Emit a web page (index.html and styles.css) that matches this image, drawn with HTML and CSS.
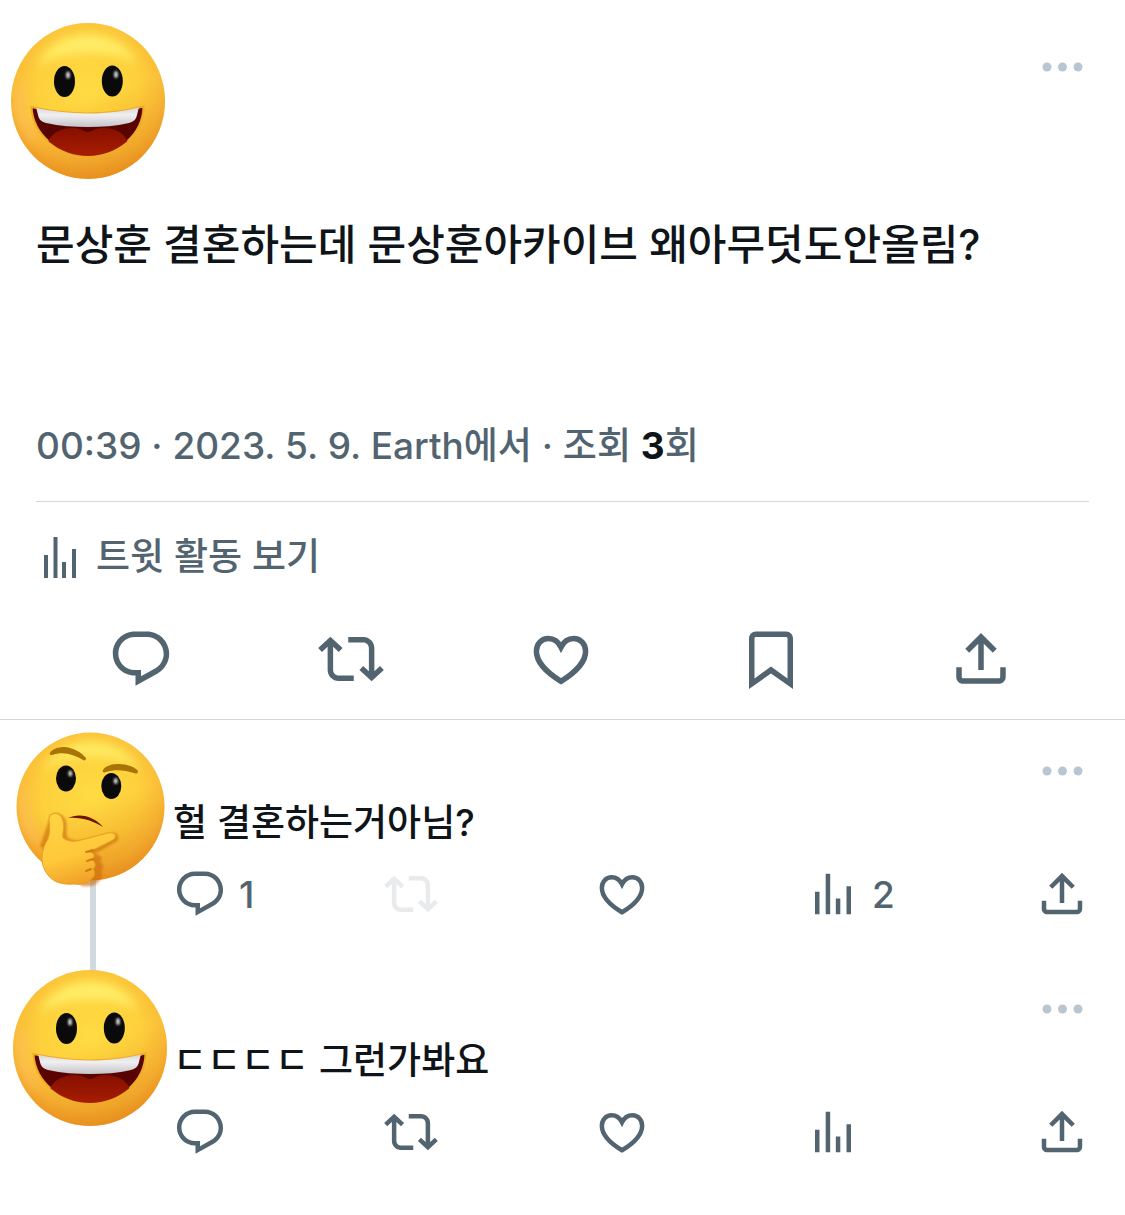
FILE: index.html
```html
<!DOCTYPE html>
<html lang="ko">
  <head>
    <meta charset="UTF-8" />
    <meta name="viewport" content="width=device-width, initial-scale=1.0" />
    <title>트윗</title>
    <link rel="stylesheet" href="styles.css">
  </head>

  <body>
    <!-- icons -->
    <svg class="defs" aria-hidden="true">
      <defs>
        <radialGradient id="skin" cx="0.5" cy="0.42" r="0.6">
          <stop offset="0" stop-color="#ffdb42" />
          <stop offset="0.55" stop-color="#fdd03c" />
          <stop offset="0.8" stop-color="#fabd38" />
          <stop offset="1" stop-color="#f09a24" />
        </radialGradient>
        <linearGradient id="shade" x1="0.3" y1="0" x2="0.6" y2="1">
          <stop offset="0.5" stop-color="#e88a1c" stop-opacity="0" />
          <stop offset="1" stop-color="#e08418" stop-opacity="0.6" />
        </linearGradient>
        <linearGradient id="hand" x1="0.2" y1="0" x2="0.5" y2="1">
          <stop offset="0" stop-color="#ffd444" />
          <stop offset="0.6" stop-color="#ffc83a" />
          <stop offset="1" stop-color="#f0a028" />
        </linearGradient>
        <linearGradient id="teeth" x1="0" y1="0" x2="0" y2="1">
          <stop offset="0" stop-color="#c8c8cc" />
          <stop offset="0.5" stop-color="#f0f0f2" />
          <stop offset="1" stop-color="#c4c4c9" />
        </linearGradient>
        <linearGradient id="tongue" x1="0" y1="0" x2="0" y2="1">
          <stop offset="0" stop-color="#861000" />
          <stop offset="1" stop-color="#b02000" />
        </linearGradient>
        <filter id="soft" x="-50%" y="-50%" width="200%" height="200%">
          <feGaussianBlur stdDeviation="5" />
        </filter>
        <filter id="softer" x="-50%" y="-50%" width="200%" height="200%">
          <feGaussianBlur stdDeviation="1" />
        </filter>
        <clipPath id="mouth">
          <path d="M20.500 84C39 88 58 90.500 77 90.500S115 88 132.500 83.500C132 112 106 133 77 133S22 112 20.500 84z" />
        </clipPath>
      </defs>
      <symbol id="grin" viewBox="0 0 154 156">
        <ellipse cx="77" cy="78" rx="77" ry="78" fill="url(#skin)" />
        <ellipse cx="77" cy="78" rx="77" ry="78" fill="url(#shade)" />
        <path d="M25 44C38 20 58 12 77 12s38 8 49 28c-16-9-32-10-49-10s-38 3-52 14z" fill="#fff06c" opacity="0.9" filter="url(#soft)" />
        <path d="M11 62C7 84 11 104 23 118" fill="none" stroke="#ffc07c" stroke-width="6" opacity="0.5" filter="url(#soft)" />
        <ellipse cx="53.500" cy="58.500" rx="10.500" ry="15.500" fill="#0b0a0a" />
        <ellipse cx="101.300" cy="58" rx="10.500" ry="15.500" fill="#0b0a0a" />
        <ellipse cx="57" cy="52" rx="2" ry="3.500" fill="#d0d0d0" filter="url(#softer)" />
        <ellipse cx="105" cy="51.500" rx="2" ry="3.500" fill="#d0d0d0" filter="url(#softer)" />
        <path d="M20.500 84C39 88 58 90.500 77 90.500S115 88 132.500 83.500C132 112 106 133 77 133S22 112 20.500 84z" fill="#590400" stroke="#efaa28" stroke-width="2" />
        <g clip-path="url(#mouth)">
          <path d="M36 122c3-12 14-17 27-17 7 0 10 4 14 4s7-4 14-4c13 0 24 5 27 17l-8 18H44z" fill="url(#tongue)" />
          <path d="M24 80l3 12c1 5 4 7 8 8 14 3 28 4 42 4s28-1 41-4c4-1 7-3 8-8l3-12-51 8z" fill="url(#teeth)" />
        </g>
      </symbol>
      <symbol id="thinking" viewBox="0 0 154 156">
        <circle cx="77.500" cy="74.500" r="74" fill="url(#skin)" />
        <circle cx="77.500" cy="74.500" r="74" fill="url(#shade)" />
        <path d="M28 40C41 19 60 10 78 10s38 9 49 28c-16-10-32-13-49-13s-36 4-50 15z" fill="#fff06c" opacity="0.8" filter="url(#soft)" />
        <path d="M13 58c-4 20 0 38 11 52" fill="none" stroke="#ffc07c" stroke-width="6" opacity="0.5" filter="url(#soft)" />
        <ellipse cx="53" cy="46.500" rx="10" ry="13" fill="#0b0a0a" />
        <ellipse cx="98.300" cy="54" rx="10" ry="13" fill="#0b0a0a" />
        <ellipse cx="57.300" cy="41.500" rx="2" ry="3" fill="#d0d0d0" filter="url(#softer)" />
        <ellipse cx="102.700" cy="49" rx="2" ry="3" fill="#d0d0d0" filter="url(#softer)" />
        <path d="M37 21c2-4 8-6 15-6 9 1 17 6 21 11 0 2-1 3-3 2-9-5-19-9-31-5-2 0-3-1-2-2z" fill="#a87408" />
        <path d="M90 38c3-5 10-6 16-6 8 0 16 3 19 7 0 3-2 3-4 2-9-3-19-4-28-1-2 1-4 0-3-2z" fill="#a87408" />
        <path d="M55 86c12-6 27-1 35 9-10-6-21-10-35-9z" fill="#6e1500" />
        <path d="M36 88c0-9 14-9 17 1 2 7-1 12 2 17 6 3 10 3 16 2l27-7c7-2 10 6 5 9l-18 10c-2 1-3 1-4 2 6 0 10 4 6 8 4 2 4 7 1 9 3 4 1 9-3 11-2 4-9 5-16 4l-42-40z" fill="#c96a08" opacity="0.6" filter="url(#softer)" />
        <path d="M36 88c0-9 12-9 14 1 2 7-1 12 0 17 6 4 12 4 18 2l27-7c7-2 10 4 5 7l-20 10c-2 1-4 1-5 2 6 0 8 4 4 8 4 2 4 7 1 9 3 4 1 9-3 11-2 4-9 5-16 4-12 1-21-2-26-9-9-11-7-25 0-36 2-6 2-12 1-19z" fill="url(#hand)" stroke="#e9a01e" stroke-width="1" />
        <path d="M73 120l7-2M74 129l6-2M73 139l5-2" fill="none" stroke="#c66f08" stroke-width="2" stroke-linecap="round" opacity="0.8" />
      </symbol>
      <symbol id="more" viewBox="0 0 54 54">
        <circle cx="12" cy="27" r="4.500" />
        <circle cx="27.500" cy="27" r="4.500" />
        <circle cx="43" cy="27" r="4.500" />
      </symbol>
      <symbol id="reply" viewBox="0 0 24 24">
        <path d="M1.751 10c0-4.420 3.584-8 8.005-8h4.366c4.490 0 8.129 3.640 8.129 8.130 0 2.960-1.607 5.680-4.196 7.110l-8.054 4.460v-3.690h-.067c-4.490.1-8.183-3.510-8.183-8.010zm8.005-6c-3.317 0-6.005 2.690-6.005 6 0 3.370 2.770 6.080 6.138 6.010l.351-.01h1.761v2.300l5.087-2.810c1.951-1.080 3.163-3.130 3.163-5.360 0-3.390-2.744-6.130-6.129-6.130H9.756z" />
      </symbol>
      <symbol id="retweet" viewBox="0 0 24 24">
        <path d="M4.500 3.880l4.432 4.140-1.364 1.460L5.500 7.550V16c0 1.100.896 2 2 2H13v2H7.500c-2.209 0-4-1.790-4-4V7.550L1.432 9.480.068 8.020 4.500 3.880zM16.500 6H11V4h5.500c2.209 0 4 1.790 4 4v8.450l2.068-1.930 1.364 1.460-4.432 4.140-4.432-4.140 1.364-1.460 2.068 1.930V8c0-1.100-.896-2-2-2z" />
      </symbol>
      <symbol id="like" viewBox="0 0 24 24">
        <path d="M12 20.100C6.500 16.800 3.050 12.800 3.050 9.200c0-2.700 1.900-4.650 4.350-4.650 1.900 0 3.600 1.150 4.600 3.150 1-2 2.700-3.150 4.600-3.150 2.450 0 4.350 1.950 4.350 4.650 0 3.600-3.450 7.600-8.950 10.900z" fill="none" stroke="currentColor" stroke-width="2" />
      </symbol>
      <symbol id="bookmark" viewBox="0 0 24 24">
        <path d="M4 4.500C4 3.120 5.119 2 6.500 2h11C18.881 2 20 3.120 20 4.500v18.440l-8-5.710-8 5.710V4.500zM6.500 4c-.276 0-.5.220-.5.500v14.560l6-4.290 6 4.290V4.500c0-.280-.224-.5-.5-.5h-11z" />
      </symbol>
      <symbol id="share" viewBox="0 0 24 24">
        <path d="M12 2.590l5.700 5.700-1.410 1.420L13 6.410V16h-2V6.410l-3.300 3.300-1.410-1.420L12 2.590zM21 15l-.02 3.510c0 1.380-1.120 2.490-2.500 2.490H5.500C4.110 21 3 19.880 3 18.500V15h2v3.500c0 .280.220.5.5.5h12.980c.280 0 .5-.220.5-.5L19 15h2z" />
      </symbol>
      <symbol id="stats" viewBox="0 0 24 24">
        <path d="M8.750 21V3h2v18h-2zM18 21V8.500h2V21h-2zM4 21V11h2v10H4zm9.250 0v-7h2v7h-2z" />
      </symbol>
      <symbol id="activity" viewBox="0 0 48 48">
        <path d="M8 45V22h4v23H8zM17.500 45V4h4v41h-4zM26 45V29h4v16h-4zM36 45V16h4v29h-4z" />
      </symbol>
    </svg>

    <main>
      <article class="tweet">
        <header>
          <svg class="avatar" role="img" aria-label="avatar"><use href="#grin" /></svg>
          <button class="more" aria-label="더 보기"><svg><use href="#more" /></svg></button>
        </header>
        <p class="title">문상훈 결혼하는데 문상훈아카이브 왜아무덧도안올림?</p>
        <p class="meta">00:39 · 2023. 5. 9. Earth에서 · 조회 <b>3</b>회</p>
        <a class="activity" href="#"><svg><use href="#activity" /></svg>트윗 활동 보기</a>
        <div class="actions">
          <button aria-label="답글"><svg><use href="#reply" /></svg></button>
          <button aria-label="리트윗"><svg><use href="#retweet" /></svg></button>
          <button aria-label="마음에 들어요"><svg><use href="#like" /></svg></button>
          <button aria-label="북마크"><svg><use href="#bookmark" /></svg></button>
          <button aria-label="공유"><svg><use href="#share" /></svg></button>
        </div>
      </article>

      <ul class="replies">
        <li>
          <div class="side">
            <svg class="avatar" role="img" aria-label="avatar"><use href="#thinking" /></svg>
            <div class="line"></div>
          </div>
          <div class="content">
            <button class="more" aria-label="더 보기"><svg><use href="#more" /></svg></button>
            <p>헐 결혼하는거아님?</p>
            <div class="actions">
              <button aria-label="답글 1"><svg><use href="#reply" /></svg>1</button>
              <button aria-label="리트윗" disabled><svg><use href="#retweet" /></svg></button>
              <button aria-label="마음에 들어요"><svg><use href="#like" /></svg></button>
              <button aria-label="조회 2"><svg><use href="#stats" /></svg>2</button>
              <button aria-label="공유"><svg><use href="#share" /></svg></button>
            </div>
          </div>
        </li>
        <li>
          <div class="side">
            <svg class="avatar" role="img" aria-label="avatar"><use href="#grin" /></svg>
          </div>
          <div class="content">
            <button class="more" aria-label="더 보기"><svg><use href="#more" /></svg></button>
            <p>ㄷㄷㄷㄷ 그런가봐요</p>
            <div class="actions">
              <button aria-label="답글"><svg><use href="#reply" /></svg></button>
              <button aria-label="리트윗"><svg><use href="#retweet" /></svg></button>
              <button aria-label="마음에 들어요"><svg><use href="#like" /></svg></button>
              <button aria-label="조회"><svg><use href="#stats" /></svg></button>
              <button aria-label="공유"><svg><use href="#share" /></svg></button>
            </div>
          </div>
        </li>
      </ul>
    </main>
  </body>
</html>
```

FILE: styles.css
```css
body {
  margin: 0;
  background: #fff;
  color: #0f1419;
  font-family: Inter, "Noto Sans CJK KR", sans-serif;
  font-size: 37px;
  font-weight: 500;
}
p {
  margin: 0;
}
ul {
  list-style: none;
  margin: 0;
  padding: 0;
}
button {
  display: flex;
  align-items: center;
  gap: 12px;
  padding: 0;
  border: 0;
  background: none;
  color: #536471;
  font: inherit;
  cursor: pointer;
}
svg {
  display: block;
  flex: none;
  fill: currentColor;
}
.defs {
  position: absolute;
  width: 0;
  height: 0;
}
.avatar {
  width: 154px;
  height: 156px;
}
.more {
  color: #b9c6d0;
}
.more svg {
  width: 54px;
  height: 54px;
}

/* main tweet */
.tweet {
  padding: 23px 36px 27px;
  border-bottom: 1px solid #d3d8dc;
}
.tweet header {
  display: flex;
  justify-content: space-between;
  align-items: flex-start;
  margin-left: -25px;
}
.tweet .more {
  margin-top: 17px;
}
.title {
  margin-top: 36px;
  font-size: 42px;
  line-height: 60px;
}
.meta {
  padding: 144px 0 28px;
  border-bottom: 1px solid #d3d8dc;
  color: #536471;
  line-height: 54px;
}
.meta b {
  color: #0f1419;
  font-weight: 700;
}
.activity {
  display: flex;
  align-items: center;
  gap: 12px;
  margin-top: 28px;
  color: #536471;
  line-height: 54px;
  text-decoration: none;
}
.activity svg {
  width: 48px;
  height: 48px;
}
.tweet .actions {
  display: grid;
  grid-template-columns: repeat(5, 1fr);
  justify-items: center;
  margin-top: 42px;
  padding-right: 3px;
}
.tweet .actions svg {
  width: 66px;
  height: 66px;
}

/* replies */
.replies {
  padding-top: 12px;
}
.replies li {
  display: flex;
}
.side {
  display: flex;
  flex-direction: column;
  flex: none;
  width: 173px;
}
.side .avatar {
  margin-left: 13px;
  z-index: 1;
}
.side .line {
  flex: 1;
  width: 6px;
  margin: -10px 0 -4px 90px;
  background: #cfd9de;
}
.content {
  flex: 1;
  padding: 12px 36px 49px 0;
}
.content .more {
  margin-left: auto;
}
.content p {
  line-height: 50px;
}
.content .actions {
  display: grid;
  grid-template-columns: repeat(4, 1fr) 72px;
  margin-top: 19px;
}
.content .actions svg {
  width: 54px;
  height: 54px;
}
.content .actions button:last-child {
  justify-content: flex-end;
}
.content .actions button:disabled {
  color: #e9eaec;
  cursor: default;
}
```
